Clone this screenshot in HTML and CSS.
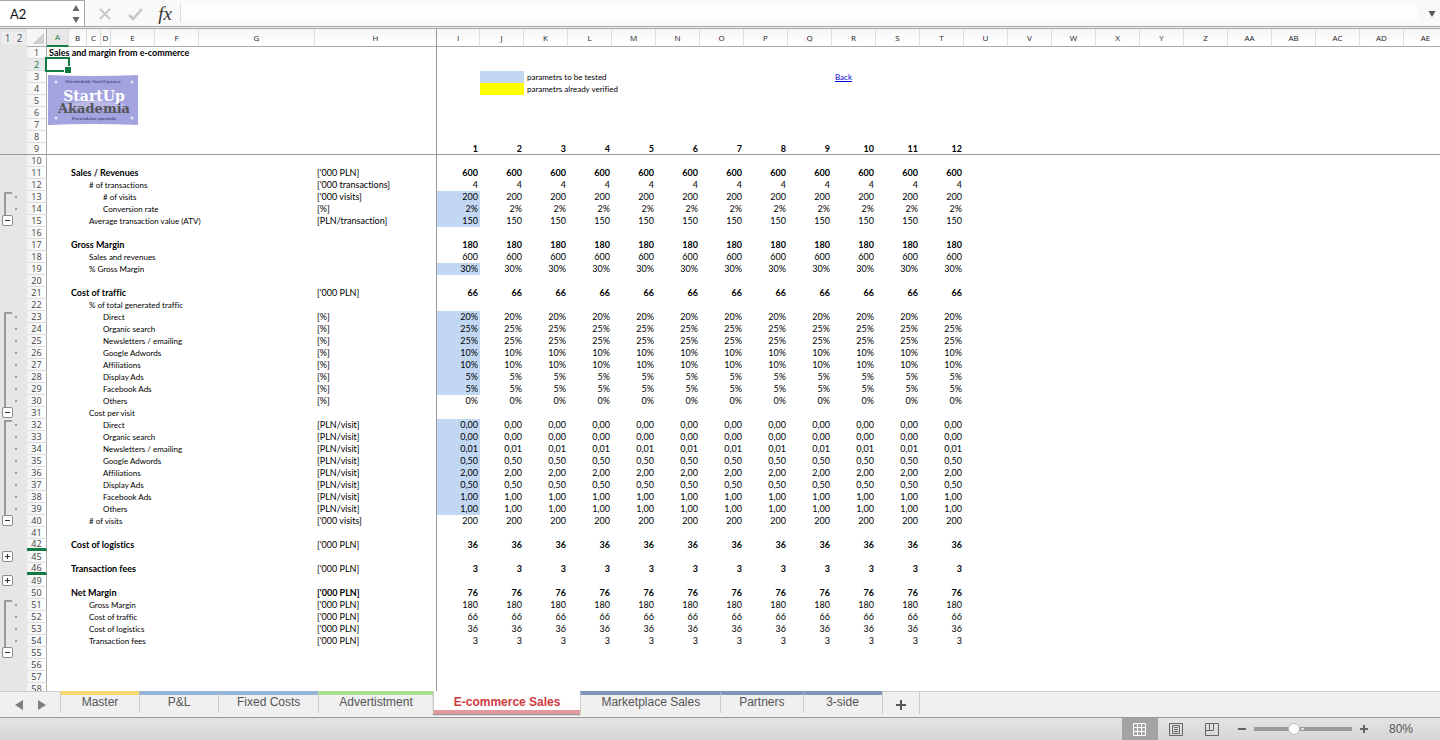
FILE: index.html
```
<!DOCTYPE html>
<html lang="en">
<head>
  <meta charset="UTF-8">
  <meta name="viewport" content="width=device-width, initial-scale=1.0">
  <title>E-commerce Sales</title>
  <link rel="stylesheet" href="styles.css">
</head>
<body>
  <div class="formula-bar">
    <div class="name-box">
      <input type="text" id="cellName" aria-label="Cell name" value="A2">
      <button type="button" class="name-arrows" aria-label="Choose cell">
        <svg width="8" height="20" viewBox="0 0 8 20"><path d="M4 1L7.500 7H.5zM4 19L.5 13h7z" fill="#666"/></svg>
      </button>
    </div>
    <button type="button" class="fx-button" aria-label="Cancel">
      <svg width="14" height="14" viewBox="0 0 14 14"><path d="M2 2l10 10M12 2L2 12" stroke="#c6c6c6" stroke-width="2" fill="none"/></svg>
    </button>
    <button type="button" class="fx-button" aria-label="Enter">
      <svg width="15" height="14" viewBox="0 0 15 14"><path d="M1 8l4 4L14 2" stroke="#c6c6c6" stroke-width="2.500" fill="none"/></svg>
    </button>
    <button type="button" class="fx-button fx-label" aria-label="Insert function"><i>fx</i></button>
    <input type="text" class="formula" aria-label="Formula">
    <button type="button" class="expand" aria-label="Expand formula bar">
      <svg width="8" height="6" viewBox="0 0 8 6"><path d="M.5 0h7L4 6z" fill="#555"/></svg>
    </button>
  </div>

  <main class="sheet">
    <table class="grid">
      <colgroup id="cols"></colgroup>
      <thead><tr id="head"></tr></thead>
      <tbody id="rows"></tbody>
    </table>
    <div class="selection"></div>
    <svg class="logo" width="90" height="50" viewBox="0 0 90 50">
      <path d="M0 0Q45 2 90 0V50Q45 48 0 50z" fill="#a3a3e0"/>
      <path d="M14 30L45 25l32 4v4H14z" fill="#b9b9e6"/>
      <g fill="#e6e6f8"><circle cx="8" cy="7" r="1.500"/><circle cx="84" cy="7" r="1.500"/><circle cx="8" cy="43" r="1.500"/><circle cx="84" cy="43" r="1.500"/></g>
      <text class="logo-small" x="45" y="8">Niezbednik StartUpowca</text>
      <text class="logo-name logo-white" x="46" y="26">StartUp</text>
      <text class="logo-name logo-dark" x="46" y="38">Akademia</text>
      <text class="logo-small" x="46" y="45">Prowadzisz sprawdz</text>
    </svg>
  </main>

  <nav class="tabs">
    <div class="tab-nav">
      <button type="button" aria-label="Previous sheet"><svg width="8" height="10" viewBox="0 0 8 10"><path d="M8 0v10L0 5z" fill="#7f7f7f"/></svg></button>
      <button type="button" aria-label="Next sheet"><svg width="8" height="10" viewBox="0 0 8 10"><path d="M0 0v10l8-5z" fill="#7f7f7f"/></svg></button>
    </div>
    <button type="button" class="tab yellow">Master</button>
    <button type="button" class="tab blue">P&amp;L</button>
    <button type="button" class="tab blue">Fixed Costs</button>
    <button type="button" class="tab wide green">Advertistment</button>
    <button type="button" class="tab wide active">E-commerce Sales</button>
    <button type="button" class="tab wide navy">Marketplace Sales</button>
    <button type="button" class="tab navy">Partners</button>
    <button type="button" class="tab navy">3-side</button>
    <button type="button" class="add-tab" aria-label="Add sheet"><svg width="10" height="10" viewBox="0 0 10 10"><path d="M5 0v10M0 5h10" stroke="#555" stroke-width="2"/></svg></button>
  </nav>

  <footer class="status">
    <button type="button" class="view selected" aria-label="Normal view">
      <svg width="13" height="13" viewBox="0 0 13 13"><path d="M.5.5h12v12H.5zM4.500 0v13M8.500 0v13M0 4.500h13M0 8.500h13" stroke="#fff" fill="none"/></svg>
    </button>
    <button type="button" class="view" aria-label="Page layout">
      <svg width="14" height="13" viewBox="0 0 14 13"><path d="M.5.5h13v12H.5zM3.500 2.500h7v8h-7zM5 4.500h4M5 6.500h4M5 8.500h4" stroke="#666" fill="none"/></svg>
    </button>
    <button type="button" class="view" aria-label="Page break preview">
      <svg width="14" height="13" viewBox="0 0 14 13"><path d="M.5.5h13v12H.5zM.5 7.500h8v-7M4.500 .5v7" stroke="#666" fill="none"/></svg>
    </button>
    <button type="button" class="zoom-step" aria-label="Zoom out"><svg width="8" height="8" viewBox="0 0 8 8"><path d="M0 4h8" stroke="#666" stroke-width="2"/></svg></button>
    <input type="range" class="zoom-slider" aria-label="Zoom" min="0" max="100" value="39">
    <button type="button" class="zoom-step" aria-label="Zoom in"><svg width="8" height="8" viewBox="0 0 8 8"><path d="M4 0v8M0 4h8" stroke="#666" stroke-width="2"/></svg></button>
    <span class="zoom-value">80%</span>
  </footer>

  <script src="script.js"></script>
</body>
</html>
```
FILE: styles.css
```
* {
  box-sizing: border-box;
}

body {
  margin: 0;
  height: 100vh;
  display: flex;
  flex-direction: column;
  overflow: hidden;
  background-color: #ffffff;
  font-family: "Liberation Sans", Arial, sans-serif;
}

button {
  margin: 0;
  padding: 0;
  border: none;
  background: none;
  font-family: inherit;
  cursor: pointer;
}

button svg {
  display: block;
}

/* formula bar */
.formula-bar {
  flex: none;
  display: flex;
  align-items: stretch;
  height: 29px;
  border-bottom: 1px solid #a6a6a6;
  background: linear-gradient(#f9f9f9 26px, #a6a6a6 26px, #a6a6a6 27px, #f0f0f0 27px);
  padding-bottom: 1px;
}

.name-box {
  display: flex;
  align-items: center;
  width: 85px;
  height: 27px;
  padding: 0 4px 0 10px;
  border: 1px solid #a6a6a6;
  border-left: none;
  background-color: #ffffff;
}

.name-box input {
  flex: 1;
  min-width: 0;
  padding: 0;
  border: none;
  font: 13px Lato, sans-serif;
  color: #111111;
}

.fx-button {
  display: flex;
  align-items: center;
  justify-content: center;
  width: 30px;
  height: 27px;
}

.name-box + .fx-button {
  margin-left: 5px;
}

.fx-label {
  font: 19px "Liberation Serif", serif;
  color: #333333;
}

.formula {
  flex: 1;
  height: 18px;
  margin: 4px 0 0;
  border: none;
  border-left: 1px solid #dddddd;
  background-color: #fdfdfd;
}

.expand {
  width: 22px;
  height: 27px;
  padding-left: 10px;
}

/* sheet */
.sheet {
  position: relative;
  flex: 1;
  min-height: 0;
  overflow: hidden;
}

.grid {
  table-layout: fixed;
  width: 0;
  border-collapse: separate;
  border-spacing: 0;
  font-family: Lato, Calibri, sans-serif;
  font-size: 9px;
  font-variant-ligatures: none;
  line-height: 12px;
  color: #000000;
}

.grid th,
.grid td {
  height: 12px;
  padding: 0 2px;
  white-space: nowrap;
  text-align: left;
}

.grid thead th {
  height: 18px;
  padding: 0;
  border-right: 1px solid #dcdcdc;
  border-bottom: 1px solid #ababab;
  background: linear-gradient(#f6f6f6, #ffffff);
  font-family: "Open Sans", sans-serif;
  font-size: 8px;
  font-weight: normal;
  text-align: center;
  color: #222222;
}

.grid thead .levels {
  border: none;
  background: #e6e6e6;
}

.level-buttons {
  display: flex;
  gap: 1px;
  padding-left: 2px;
}

.level-buttons button {
  width: 11px;
  height: 12px;
  background-color: #eeeeee;
  font-size: 10px;
  line-height: 12px;
  color: #44546a;
}

.grid thead .corner {
  border-right-color: #ababab;
  background: linear-gradient(135deg, transparent 50%, #d0d0d0 50%) 6px 4px / 11px 11px no-repeat #f6f6f6;
}

.grid thead .current {
  color: #107c41;
  border-bottom: 2px solid #107c41;
  background: #e8e8e8;
}

.grid tbody .gutter {
  padding: 0;
  background-color: #e6e6e6;
}

.gutter-row {
  display: flex;
  align-items: center;
  justify-content: space-between;
  height: 12px;
  padding: 0 10px 0 4px;
}

.gutter-row.member::before,
.gutter-row.member::after {
  content: "";
}

.gutter-row.member::before {
  align-self: stretch;
  width: 6px;
  border-left: 2px solid #9b9b9b;
}

.gutter-row.first::before {
  margin-top: 1px;
  border-top: 2px solid #9b9b9b;
}

.gutter-row.member::after {
  width: 2px;
  height: 2px;
  background-color: #9b9b9b;
}

.gutter-row.toggle {
  padding-left: 2px;
  align-items: flex-start;
  justify-content: flex-start;
}

.gutter-row button {
  display: flex;
  align-items: center;
  justify-content: center;
  width: 11px;
  height: 11px;
  border: 1px solid #8c8c8c;
  border-radius: 2px;
  background-color: #ffffff;
}

.grid tbody th {
  padding: 0;
  border-right: 1px solid #ababab;
  border-bottom: 1px solid #dddddd;
  background: linear-gradient(90deg, #f2f2f2, #ffffff);
  font-family: "Open Sans", sans-serif;
  font-size: 9px;
  line-height: 11px;
  font-weight: normal;
  text-align: center;
  color: #444444;
}

.grid tbody th.current {
  color: #107c41;
  background: #e8e8e8;
}

.grid tbody th.collapsed {
  border-bottom: 3px solid #107c41;
  line-height: 9px;
}

.grid .split,
.grid thead .split {
  border-right: 1px solid #999999;
}

.grid .frozen > * {
  border-bottom: 1px solid #999999;
  line-height: 11px;
}

.grid .num {
  text-align: right;
}

.grid .small {
  font-size: 8px;
}

.grid .bold {
  font-weight: bold;
}

.grid .input {
  background-color: #c2d7f1;
}

.grid .verified {
  background-color: #ffff00;
}

.grid .indent {
  padding-left: 3px;
}

.grid a {
  color: #0000d4;
}

.selection {
  position: absolute;
  left: 45px;
  top: 28px;
  width: 25px;
  height: 15px;
  border: 2px solid #107c41;
}

.selection::after {
  content: "";
  position: absolute;
  right: -3px;
  bottom: -3px;
  width: 6px;
  height: 6px;
  border: solid #ffffff;
  border-width: 1px 0 0 1px;
  background-color: #107c41;
}

.logo {
  position: absolute;
  left: 48px;
  top: 46px;
}

.logo-name {
  font: bold 14px "DejaVu Serif", serif;
  text-anchor: middle;
}

.logo-white {
  fill: #ffffff;
}

.logo-dark {
  font-size: 13px;
  fill: #555555;
}

.logo-small {
  font: bold 4px "DejaVu Serif", serif;
  text-anchor: middle;
  fill: #55558a;
}

/* sheet tabs */
.tabs {
  flex: none;
  display: flex;
  height: 27px;
  border-top: 1px solid #cccccc;
  border-bottom: 1px solid #999999;
  background-color: #f0f0f0;
}

.tab-nav {
  display: flex;
  align-items: center;
  gap: 15px;
  width: 60px;
  padding-left: 15px;
}

.tab {
  min-width: 79px;
  height: 22px;
  margin-top: -1px;
  padding: 0 18px 4px;
  border-top: 4px solid;
  border-left: 1px solid #cccccc;
  font-size: 12px;
  line-height: 14px;
  color: #555555;
}

.tab.wide {
  padding: 0 20px 4px;
}

.yellow {
  border-top-color: #f8d775;
}

.blue {
  border-top-color: #95b3d7;
}

.green {
  border-top-color: #a9e08f;
}

.navy {
  border-top-color: #7f96b8;
}

.tab.active {
  height: 23px;
  padding-top: 2px;
  padding-bottom: 0;
  border-top: none;
  border-bottom: 4px solid #e39a9f;
  background-color: #ffffff;
  box-shadow: 0 1px 1px #999999;
  font-weight: bold;
  color: #cf3a42;
}

.add-tab {
  height: 22px;
  width: 38px;
  padding: 3px 13px 0;
  border-left: 1px solid #cccccc;
  border-right: 1px solid #cccccc;
}

/* status bar */
.status {
  flex: none;
  display: flex;
  align-items: center;
  justify-content: flex-end;
  height: 22px;
  padding-right: 27px;
  background: linear-gradient(#e4e4e4, #d6d6d6);
}

.view {
  display: flex;
  align-items: center;
  justify-content: center;
  width: 36px;
  height: 22px;
}

.view.selected {
  background-color: #a3a3a3;
}

.zoom-step {
  margin: 0 8px;
}

.zoom-slider {
  appearance: none;
  width: 98px;
  height: 12px;
  margin: 0;
  background:
    linear-gradient(#dddddd, #dddddd) 50% 50% / 3px 2px no-repeat,
    linear-gradient(#999999, #999999) center / 100% 4px no-repeat;
}

.zoom-slider::-webkit-slider-thumb {
  appearance: none;
  width: 12px;
  height: 12px;
  border: 1px solid #bbbbbb;
  border-radius: 50%;
  background-color: #ffffff;
}

.zoom-value {
  margin-left: 13px;
  font-size: 12px;
  color: #555555;
}
```
FILE: script.js
```
const MONTHS = 12;
const colNames = ['A', 'B', 'C', 'D', 'E', 'F', 'G', 'H', 'I', 'J', 'K', 'L', 'M', 'N', 'O', 'P', 'Q', 'R', 'S', 'T', 'U', 'V', 'W', 'X', 'Y', 'Z', 'AA', 'AB', 'AC', 'AD', 'AE'];
const colWidths = [22, 18, 14, 10, 44, 44, 116, 122, 43];

// row number: [label column, label, unit, value, options]
const data = {
  11: ['B', 'Sales / Revenues', "['000 PLN]", '600', 'boldLabel boldNum'],
  12: ['C', '# of transactions', "['000 transactions]", '4', ''],
  13: ['D', '# of visits', "['000 visits]", '200', 'input'],
  14: ['D', 'Conversion rate', '[%]', '2%', 'input'],
  15: ['C', 'Average transaction value (ATV)', '[PLN/transaction]', '150', 'input'],
  17: ['B', 'Gross Margin', '', '180', 'boldLabel boldNum'],
  18: ['C', 'Sales and revenues', '', '600', ''],
  19: ['C', '% Gross Margin', '', '30%', 'input'],
  21: ['B', 'Cost of traffic', "['000 PLN]", '66', 'boldLabel boldNum'],
  22: ['C', '% of total generated traffic', '', '', ''],
  23: ['D', 'Direct', '[%]', '20%', 'input'],
  24: ['D', 'Organic search', '[%]', '25%', 'input'],
  25: ['D', 'Newsletters / emailing', '[%]', '25%', 'input'],
  26: ['D', 'Google Adwords', '[%]', '10%', 'input'],
  27: ['D', 'Affiliations', '[%]', '10%', 'input'],
  28: ['D', 'Display Ads', '[%]', '5%', 'input'],
  29: ['D', 'Facebook Ads', '[%]', '5%', 'input'],
  30: ['D', 'Others', '[%]', '0%', ''],
  31: ['C', 'Cost per visit', '', '', ''],
  32: ['D', 'Direct', '[PLN/visit]', '0,00', 'input'],
  33: ['D', 'Organic search', '[PLN/visit]', '0,00', 'input'],
  34: ['D', 'Newsletters / emailing', '[PLN/visit]', '0,01', 'input'],
  35: ['D', 'Google Adwords', '[PLN/visit]', '0,50', 'input'],
  36: ['D', 'Affiliations', '[PLN/visit]', '2,00', 'input'],
  37: ['D', 'Display Ads', '[PLN/visit]', '0,50', 'input'],
  38: ['D', 'Facebook Ads', '[PLN/visit]', '1,00', 'input'],
  39: ['D', 'Others', '[PLN/visit]', '1,00', 'input'],
  40: ['C', '# of visits', "['000 visits]", '200', ''],
  42: ['B', 'Cost of logistics', "['000 PLN]", '36', 'boldLabel boldNum'],
  46: ['B', 'Transaction fees', "['000 PLN]", '3', 'boldLabel boldNum'],
  50: ['B', 'Net Margin', "['000 PLN]", '76', 'boldLabel boldUnit boldNum'],
  51: ['C', 'Gross Margin', "['000 PLN]", '180', ''],
  52: ['C', 'Cost of traffic', "['000 PLN]", '66', ''],
  53: ['C', 'Cost of logistics', "['000 PLN]", '36', ''],
  54: ['C', 'Transaction fees', "['000 PLN]", '3', '']
};

const groups = [[13, 14], [23, 30], [32, 39], [51, 54]];
const minus = [15, 31, 40, 55];
const plus = [45, 49];
const hidden = [43, 44, 47, 48];

function gutter(row) {
  if (minus.includes(row) || plus.includes(row)) {
    const open = minus.includes(row);
    const path = open ? 'M1 3.500h5' : 'M1 3.500h5M3.500 1v5';
    return `<div class="gutter-row toggle"><button type="button" aria-label="${open ? 'Collapse' : 'Expand'} group"><svg width="7" height="7" viewBox="0 0 7 7"><path d="${path}" stroke="#333"/></svg></button></div>`;
  }
  const group = groups.find(g => row >= g[0] && row <= g[1]);
  if (!group) return '';
  return `<div class="gutter-row member${row === group[0] ? ' first' : ''}"></div>`;
}

function cell(row, col) {
  const name = colNames[col];
  const month = col - 7;
  const classes = name === 'H' ? ['split'] : [];
  let text = '';

  if (row === 1 && name === 'A') {
    text = 'Sales and margin from e-commerce';
    classes.push('bold');
  } else if (row === 3 && name === 'J') {
    classes.push('input');
  } else if (row === 4 && name === 'J') {
    classes.push('verified');
  } else if (row === 3 && name === 'K') {
    text = 'parametrs to be tested';
    classes.push('indent', 'small');
  } else if (row === 4 && name === 'K') {
    text = 'parametrs already verified';
    classes.push('indent', 'small');
  } else if (row === 3 && name === 'R') {
    text = '<a href="#">Back</a>';
    classes.push('indent', 'small');
  } else if (row === 9 && month >= 1 && month <= MONTHS) {
    text = month;
    classes.push('num', 'bold');
  } else if (data[row]) {
    const [labelCol, label, unit, value, options] = data[row];
    if (name === labelCol) {
      text = label;
      classes.push(options.includes('boldLabel') ? 'bold' : 'small');
    } else if (name === 'H') {
      text = unit;
      if (options.includes('boldUnit')) classes.push('bold');
    } else if (month >= 1 && month <= MONTHS) {
      text = value;
      classes.push('num');
      if (options.includes('boldNum')) classes.push('bold');
      if (month === 1 && options.includes('input')) classes.push('input');
    }
  }
  return `<td class="${classes.join(' ')}">${text}</td>`;
}

const widths = [27, 20].concat(colNames.map((name, i) => colWidths[i] || 44));
document.getElementById('cols').innerHTML = widths.map(w => `<col style="width:${w}px">`).join('');

document.getElementById('head').innerHTML =
  '<th class="levels"><div class="level-buttons"><button type="button">1</button><button type="button">2</button></div></th><th class="corner"></th>' +
  colNames.map(name => `<th class="${name === 'A' ? 'current' : name === 'H' ? 'split' : ''}">${name}</th>`).join('');

let html = '';
for (let row = 1; row <= 58; row++) {
  if (hidden.includes(row)) continue;
  const state = row === 2 ? 'current' : hidden.includes(row + 1) ? 'collapsed' : '';
  html += `<tr class="${row === 9 ? 'frozen' : ''}"><td class="gutter">${gutter(row)}</td><th class="${state}">${row}</th>`;
  html += colNames.map((name, i) => cell(row, i)).join('') + '</tr>';
}
document.getElementById('rows').innerHTML = html;
```
